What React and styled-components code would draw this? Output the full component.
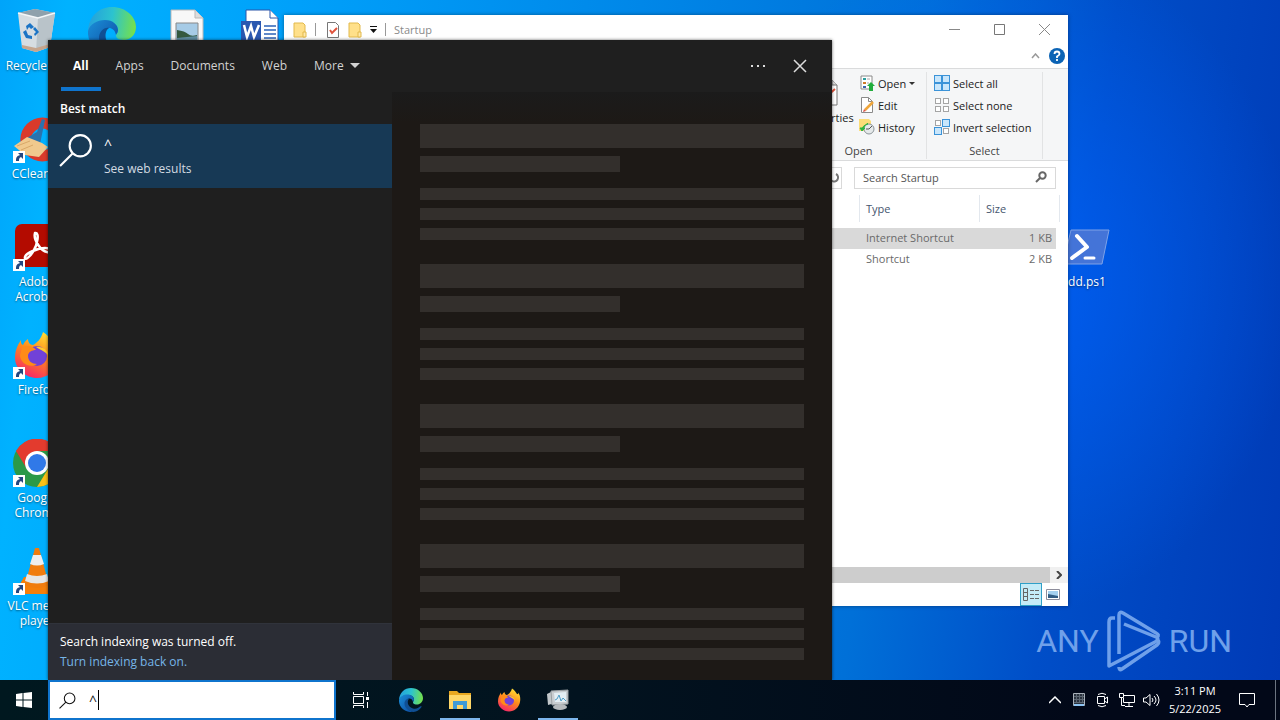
import React from 'react'
import styled, { createGlobalStyle } from 'styled-components'

const GlobalStyle = createGlobalStyle`
    * {
        box-sizing: border-box;
    }

    body {
        margin: 0;
        font-family: 'Open Sans', 'Noto Sans', sans-serif;
        overflow: hidden;
    }

    button, input {
        font-family: inherit;
        font-size: inherit;
        color: inherit;
        background: none;
        border: none;
        padding: 0;
        margin: 0;
        outline: none;
    }

    svg {
        display: block;
        flex-shrink: 0;
    }
`

/* ---------- desktop ---------- */

const Screen = styled.div`
    height: 100vh;
    display: flex;
    flex-direction: column;
`

const Desktop = styled.main`
    position: relative;
    flex: 1;
    min-height: 0;
    overflow: hidden;
    background:
        radial-gradient(ellipse 300px 340px at 1000px 280px, rgba(0, 98, 255, 0.8), rgba(0, 90, 240, 0) 100%),
        linear-gradient(97deg, #00a4fa 0%, #00b2ff 5%, #00a0fa 22%, #0084e6 50%, #0070d8 68%, #004ec8 82%, #003ab6 100%);
`

const IconGrid = styled.div`
    display: grid;
    grid-template-columns: repeat(15, 74px);
    grid-template-rows: repeat(6, 108px);
    column-gap: 1px;
`

const Shortcut = styled.a`
    grid-column: ${({ $col }) => $col};
    grid-row: ${({ $row }) => $row};
    display: flex;
    flex-direction: column;
    align-items: center;
    padding-top: 7px;
    color: #fff;
    font-size: 12px;
    line-height: 15px;
    text-align: center;
    text-decoration: none;
    text-shadow: 0 1px 2px rgba(0, 0, 0, 0.5);

    span {
        margin-top: 3px;
        padding: 0 4px;
    }
`

const Watermark = styled.div`
    position: absolute;
    right: 48px;
    bottom: 7px;
    display: flex;
    align-items: center;
    gap: 7px;
    color: #6fa0ea;
    font-family: 'Roboto', sans-serif;
    font-size: 32px;
    line-height: 64px;
`

/* ---------- explorer window ---------- */

const Explorer = styled.section`
    position: absolute;
    top: 15px;
    left: 284px;
    right: 212px;
    bottom: 74px;
    display: flex;
    flex-direction: column;
    background: #fff;
    color: #222;
    font-size: 11px;
    box-shadow: 0 0 4px rgba(0, 0, 0, 0.4);
`

const TitleBar = styled.header`
    display: flex;
    align-items: center;
    height: 29px;
    padding-left: 9px;
    gap: 8px;
    color: #8a8a8a;
`

const TitleDivider = styled.i`
    width: 1px;
    height: 13px;
    background: #999;
`

const WindowButtons = styled.div`
    display: flex;
    margin-left: auto;
    padding-right: 1px;

    button {
        display: flex;
        align-items: center;
        justify-content: center;
        width: 45px;
        height: 29px;
    }
`

const TabStrip = styled.div`
    display: flex;
    align-items: center;
    justify-content: flex-end;
    gap: 9px;
    height: 24px;
    padding-right: 3px;
`

const Ribbon = styled.div`
    display: flex;
    justify-content: flex-end;
    height: 93px;
    padding: 3px 25px 1px 0;
    background: #f5f6f7;
    border-top: 1px solid #dadbdc;
    border-bottom: 1px solid #dadbdc;
`

const RibbonGroup = styled.div`
    display: flex;
    flex-direction: column;
    align-items: center;
    border-right: 1px solid #e2e3e4;
`

const RibbonBody = styled.div`
    display: flex;
    gap: 3px;
    padding: 0 0 0 7px;
`

const RibbonColumn = styled.div`
    display: flex;
    flex-direction: column;
    width: ${({ $width }) => $width};
`

const RibbonButton = styled.button`
    display: flex;
    align-items: center;
    gap: 3px;
    height: 22px;
    white-space: nowrap;
`

const BigButton = styled.button`
    display: flex;
    flex-direction: column;
    align-items: center;
    gap: 1px;
    width: 58px;
    padding-top: 5px;
`

const GroupLabel = styled.div`
    padding-top: 5px;
    line-height: 16px;
    color: #444;
`

const AddressRow = styled.div`
    display: flex;
    gap: 12px;
    padding: 6px 12px;
`

const PathBox = styled.div`
    display: flex;
    flex: 1;
    align-items: center;
    justify-content: flex-end;
    border: 1px solid #d9d9d9;
`

const SearchBox = styled.label`
    display: flex;
    align-items: center;
    width: 202px;
    height: 22px;
    padding: 0 8px 2px;
    border: 1px solid #d9d9d9;

    input {
        flex: 1;
        min-width: 0;
    }

    input::placeholder {
        color: #555;
        opacity: 1;
    }
`

const FileTable = styled.table`
    width: calc(100% - 8px);
    table-layout: fixed;
    border-collapse: separate;
    border-spacing: 0;
    color: #6a6a6a;

    th {
        height: 27px;
        padding: 0 6px;
        border-right: 1px solid #e3e8ee;
        color: #46566e;
        font-weight: 400;
        text-align: left;
    }

    td {
        height: 21px;
        padding: 0 6px 2px;
    }

    td:last-child {
        padding-right: 4px;
        border-right: 4px solid #fff;
        text-align: right;
    }

    tbody::before {
        content: '';
        display: block;
        height: 6px;
    }
`

const FileRow = styled.tr`
    background: ${({ $selected }) => ($selected ? '#d9d9d9' : 'transparent')};
`

const ScrollTrack = styled.div`
    display: flex;
    align-items: center;
    height: 16px;
    margin-top: auto;
    background: #f0f0f0;
`

const ScrollThumb = styled.div`
    flex: 1;
    height: 16px;
    background: #cdcdcd;
`

const ScrollArrow = styled.button`
    display: flex;
    justify-content: center;
    width: 18px;
`

const StatusBar = styled.footer`
    display: flex;
    justify-content: flex-end;
    padding-right: 4px;
`

const ViewButton = styled.button`
    display: flex;
    align-items: center;
    justify-content: center;
    width: 22px;
    height: 23px;
    border: 1px solid ${({ $active }) => ($active ? '#2fa0c8' : 'transparent')};
    background: ${({ $active }) => ($active ? '#c4ebf7' : 'transparent')};
`

/* ---------- search flyout ---------- */

const Flyout = styled.section`
    position: absolute;
    top: 40px;
    bottom: 0;
    left: 48px;
    width: 784px;
    display: flex;
    flex-direction: column;
    background: #1f1f1f;
    color: #fff;
    font-size: 12px;
    box-shadow: 0 0 3px rgba(0, 0, 0, 0.6);
`

const FlyoutHeader = styled.header`
    display: flex;
    align-items: stretch;
    gap: 3px;
    height: 52px;
    padding: 0 20px 1px 13px;
`

const FilterTab = styled.button`
    display: flex;
    align-items: center;
    gap: 6px;
    padding: 4px 12px 0;
    border-bottom: 4px solid ${({ $active }) => ($active ? '#0f74cd' : 'transparent')};
    color: ${({ $active }) => ($active ? '#fff' : '#d2d2d2')};
    font-weight: ${({ $active }) => ($active ? 700 : 400)};
`

const HeaderActions = styled.div`
    display: flex;
    gap: 18px;
    margin-left: auto;

    button {
        display: flex;
        align-items: center;
        justify-content: center;
        width: 24px;
    }
`

const FlyoutBody = styled.div`
    display: flex;
    flex: 1;
    min-height: 0;
`

const ResultList = styled.div`
    display: flex;
    flex-direction: column;
    width: 344px;
`

const ListHeading = styled.h2`
    margin: 0;
    padding: 2px 12px 0;
    font-size: 12px;
    font-weight: 600;
    line-height: 30px;
`

const ResultItem = styled.button`
    display: flex;
    align-items: flex-start;
    gap: 11px;
    height: 64px;
    padding: 9px 0 0 11px;
    background: #173955;
    text-align: left;
    line-height: 24px;
`

const ResultTitle = styled.div`
    font-size: 14px;
`

const ResultHint = styled.div`
    color: #d3dbe2;
`

const IndexNotice = styled.div`
    margin-top: auto;
    padding: 8px 12px;
    border-top: 1px solid #30333b;
    background: #2b2d35;
    line-height: 20px;

    a {
        display: block;
        color: #76b5e8;
        text-decoration: none;
    }
`

const Preview = styled.div`
    flex: 1;
    padding: 32px 28px 0;
    background: linear-gradient(#1b1b1b, #1d1916 30px);
    overflow: hidden;
`

const SkeletonGroup = styled.div`
    display: flex;
    flex-direction: column;
    gap: 8px;
    margin-bottom: 24px;
`

const Bar = styled.div`
    width: ${({ $width }) => $width || '100%'};
    height: ${({ $height }) => $height || '12px'};
    margin-bottom: ${({ $space }) => $space || '0'};
    background: #332f2c;
`

/* ---------- taskbar ---------- */

const Taskbar = styled.nav`
    display: flex;
    height: 40px;
    background: linear-gradient(90deg, #00181f, #02131f 45%, #020818 85%);
    color: #fff;
`

const StartButton = styled.button`
    display: flex;
    align-items: center;
    justify-content: center;
    width: 48px;
`

const TaskSearch = styled.label`
    display: flex;
    align-items: center;
    width: 288px;
    padding-left: 9px;
    border: 2px solid #0f74cd;
    background: #fff;
    color: #111;
    font-size: 14px;

    input {
        width: 9px;
        margin-left: 13px;
        caret-color: transparent;
    }
`

const Caret = styled.i`
    width: 1px;
    height: 20px;
    background: #000;
`

const TaskButtons = styled.div`
    display: flex;
    gap: 9px;
    padding-left: 5px;
`

const TaskButton = styled.button`
    display: flex;
    align-items: center;
    justify-content: center;
    width: ${({ $wide }) => ($wide ? '41px' : '40px')};
    padding-top: 2px;
    border-bottom: 2px solid ${({ $running }) => ($running ? '#7db6ec' : 'transparent')};
`

const Tray = styled.div`
    display: flex;
    margin-left: auto;
`

const TrayButton = styled.button`
    display: flex;
    align-items: center;
    justify-content: center;
    width: ${({ $width }) => $width || '24px'};
`

const Clock = styled.button`
    width: 56px;
    margin-left: 4px;
    line-height: 18px;
    text-align: center;

    && {
        font-size: 11px;
    }
`

const ShowDesktop = styled.button`
    width: 5px;
    margin-left: 4px;

    && {
        border-left: 1px solid #6c7480;
    }
`

/* ---------- drawings ---------- */

const ShortcutArrow = () => (
    <g>
        <path d="M0 36h12v12H0z" fill="#fff" />
        <path d="M3 46c0-4 1-5 4-6l-2-2h5v6l-2-2c-2 1-2 2-2 4z" fill="#25477f" />
    </g>
)

const RecycleIcon = () => (
    <svg width="48" height="48" viewBox="0 0 48 48">
        <path d="M5 6l17-4 20 4-5 34-14 5-14-4z" fill="#d6dde2" />
        <path d="M5 6l17-4 20 4-17 5z" fill="#8fa1ac" />
        <path d="M25 11l17-5-5 34-14 5z" fill="#b9c3c9" />
        <path d="M5 6l20 5 17-5" fill="none" stroke="#f4f7f9" strokeWidth="1.5" />
        <path d="M13 19l4-3 4 4-3 2-2-2-2 3zM22 20l4 5-4 4-1-2 2-2-3-3zM19 32l-6-1-3-6 3-2 2 5 4 1z" fill="#1b74c5" />
        <path d="M9 38l14 3 14-4v3l-14 5-14-4z" fill="#c5a58d" />
    </svg>
)

const EdgeIcon = ({ size }) => (
    <svg width={size} height={size} viewBox="0 0 48 48">
        <defs>
            <linearGradient id="edgeTop" x1="0" y1="0.3" x2="1" y2="0.4">
                <stop offset="0" stopColor="#249fdd" />
                <stop offset="0.5" stopColor="#2cc3cf" />
                <stop offset="1" stopColor="#74e04c" />
            </linearGradient>
            <linearGradient id="edgeLow" x1="0" y1="0" x2="1" y2="1">
                <stop offset="0" stopColor="#1b8fd8" />
                <stop offset="1" stopColor="#0c479e" />
            </linearGradient>
        </defs>
        <path d="M0 24C1 9 11 0 24 0c14 0 24 10 24 20 0 8-6 13-12 13-7 0-8-3-8-5 0-1 2-2 2-5 0-5-5-9-12-9C8 14 2 20 0 24z" fill="url(#edgeTop)" />
        <path d="M0 24c2-7 9-11 17-11 8 0 13 5 13 10 0 3-2 4-2 5-1-5-4-7-7-7-4 0-7 5-7 10 0 9 8 16 15 17C12 50-1 38 0 24z" fill="url(#edgeLow)" />
        <path d="M21 21c-5 3-6 16 7 20 6 2 11-1 14-4 2-1 4-1 3 1-4 6-9 9-16 10-9-1-18-8-18-17 0-6 5-11 10-10z" fill="#104f93" />
    </svg>
)

const ImageFileIcon = () => (
    <svg width="48" height="48" viewBox="0 0 48 48">
        <path d="M8 3h24l8 8v36H8z" fill="#f8f8f8" stroke="#b9b9b9" />
        <path d="M32 3v8h8" fill="#dcdcdc" stroke="#b9b9b9" />
        <path d="M13 16h22v20H13z" fill="#a6cbe6" stroke="#888" />
        <path d="M14 23q8 1 11 4t9 1v7H14z" fill="#34593f" />
        <path d="M14 31l20-2v6H14z" fill="#5f8ea2" />
    </svg>
)

const WordFileIcon = () => (
    <svg width="48" height="48" viewBox="0 0 48 48">
        <path d="M8 3h24l8 8v36H8z" fill="#fff" stroke="#2b55a8" />
        <path d="M32 3v8h8" fill="#fff" stroke="#2b55a8" />
        <path d="M26 19h12M26 23h12M26 27h12M26 31h12" stroke="#2b62b8" strokeWidth="1.5" />
        <path d="M3 14h20v20H3z" fill="#2a57b0" />
        <path d="M6 18l3 12 4-11 3 11 5-12" fill="none" stroke="#fff" strokeWidth="2.5" />
    </svg>
)

const CCleanerIcon = () => (
    <svg width="48" height="48" viewBox="0 0 48 48">
        <path d="M45 9A22 22 0 1 0 45 40l-8-8A11 11 0 1 1 37 17z" fill="#d93a2b" />
        <path d="M29 4l3 1-5 24-13-6q8-5 10-6z" fill="#2a73ae" />
        <path d="M1 31l13-9 15 6 6 4-9 10-14-2z" fill="#f0c98d" />
        <path d="M4 31l13-5M8 35l12-5" stroke="#d8a868" />
        <ShortcutArrow />
    </svg>
)

const AcrobatIcon = () => (
    <svg width="48" height="48" viewBox="0 0 48 48">
        <rect x="2" y="1" width="44" height="43" rx="7" fill="#b30b00" />
        <path d="M22 10c5-1 2 12-1 17-3 6-10 12-9 7 1-4 13-9 20-9s6 5 2 4c-6-1-14-12-12-19z" fill="none" stroke="#fff" strokeWidth="2.5" />
        <ShortcutArrow />
    </svg>
)

const FirefoxIcon = ({ size, arrow }) => (
    <svg width={size} height={size} viewBox="0 0 48 48">
        <defs>
            <linearGradient id="foxBody" x1="0.8" y1="0" x2="0.3" y2="1">
                <stop offset="0" stopColor="#ffe838" />
                <stop offset="0.5" stopColor="#ff8a1c" />
                <stop offset="1" stopColor="#f6246a" />
            </linearGradient>
        </defs>
        <path d="M30 1c5 3 8 8 10 11 2 1 3-1 2-3 5 5 5 13 4 19-2 11-11 19-22 19S2 38 2 27c0-7 2-12 6-18 0 3 0 4 2 5 1-2 2-4 5-6 0 3 2 6 5 6 4-2 8-6 10-13z" fill="url(#foxBody)" />
        <circle cx="24" cy="25" r="10" fill="#7141d8" />
        <path d="M9 17c5-4 11-2 14 2-4 0-8 2-8 6 0 5 4 8 9 8-7 5-17-1-17-9z" fill="#ff8b18" />
        <path d="M23 16c6-1 12 3 13 9-4-5-9-6-13-9z" fill="#ffcb2d" />
        {arrow && <ShortcutArrow />}
    </svg>
)

const ChromeIcon = () => (
    <svg width="48" height="48" viewBox="0 0 48 48">
        <circle cx="24" cy="24" r="24" fill="#2b9948" />
        <path d="M3 12a24 24 0 0 1 42 0H24L14 30z" fill="#e33b2e" />
        <path d="M45 12a24 24 0 0 1-21 36l11-18V12z" fill="#fbc116" />
        <circle cx="24" cy="24" r="12" fill="#fff" />
        <circle cx="24" cy="24" r="9" fill="#3079e8" />
        <ShortcutArrow />
    </svg>
)

const VlcIcon = () => (
    <svg width="48" height="48" viewBox="0 0 48 48">
        <path d="M11 30h26l8 14-2 3H5l-2-3z" fill="#f57f0a" />
        <path d="M22 1h4l10 37q-12 6-24 0z" fill="#f07c0e" />
        <path d="M20 8h8l3 9q-7 3-14 0z" fill="#eee" />
        <path d="M14 27q10 4 20 0l2 7q-12 5-24 0z" fill="#e6e6e6" />
        <ShortcutArrow />
    </svg>
)

const PowerShellIcon = () => (
    <svg width="48" height="48" viewBox="0 0 48 48">
        <path d="M8 7h38l-7 34H0z" fill="#4474d8" stroke="#7ea2e8" />
        <path d="M14 13l10 11-15 11" fill="none" stroke="#fff" strokeWidth="4" strokeLinecap="round" strokeLinejoin="round" />
        <path d="M22 35h9" stroke="#fff" strokeWidth="3" strokeLinecap="round" />
    </svg>
)

const PlayLogo = () => (
    <svg width="56" height="64" viewBox="0 0 56 64" fill="none" stroke="#6fa0ea" strokeWidth="3.5" strokeLinejoin="round">
        <path d="M9 9H6Q3 9 3 13v44l46-24q5-3 1-5L18 15" />
        <path d="M51 28q3-2-1-4L17 4Q13 2 13 6v39" />
        <path d="M50 30q5 3 1 6L16 60q-3 2-3-2" />
    </svg>
)

const SmallFolder = () => (
    <svg width="14" height="16" viewBox="0 0 14 16">
        <path d="M1 1h9l2 2v12H1z" fill="#ffe08a" stroke="#e2b94c" />
        <path d="M10 10h3v5h-3z" fill="#ffe9ab" stroke="#e2b94c" />
    </svg>
)

const CheckPage = () => (
    <svg width="16" height="16" viewBox="0 0 16 16">
        <path d="M3.500.500h8l3 3v12h-11z" fill="#fff" stroke="#777" />
        <path d="M6 8l2 3 5-5" fill="none" stroke="#e0533c" strokeWidth="2" />
    </svg>
)

const PropertiesIcon = () => (
    <svg width="22" height="32" viewBox="0 0 22 32">
        <path d="M1 3h15l5 5v20H1z" fill="#fff" stroke="#777" />
        <path d="M16 3v5h5" fill="#ddd" stroke="#777" />
        <path d="M6 15l4 5 9-8" fill="none" stroke="#e0533c" strokeWidth="2" />
    </svg>
)

const OpenIcon = () => (
    <svg width="16" height="16" viewBox="0 0 16 16">
        <path d="M2 1h11v13H2z" fill="#fff" stroke="#8a8a8a" />
        <path d="M4 3h3v2H4z" fill="#2b9e9e" />
        <path d="M4 7h3v2H4z" fill="#d07c2a" />
        <path d="M4 11h3v2H4z" fill="#3b65ae" />
        <path d="M8 4h3M8 8h2" stroke="#aaa" />
        <path d="M12 7l4 4h-2v5h-4v-5H8z" fill="#22ad3c" />
    </svg>
)

const EditIcon = () => (
    <svg width="16" height="16" viewBox="0 0 16 16">
        <path d="M2.500.500h7l4 4v11h-11z" fill="#fff" stroke="#8a8a8a" />
        <path d="M9.500.500v4h4" fill="none" stroke="#8a8a8a" />
        <path d="M6 13l8-8" stroke="#f0a63a" strokeWidth="2.5" />
        <path d="M4 15l1-3 2 2z" fill="#d9534a" />
    </svg>
)

const HistoryIcon = () => (
    <svg width="16" height="16" viewBox="0 0 16 16">
        <path d="M0 0h10l2 2v10H0z" fill="#fbdd78" />
        <circle cx="10" cy="10" r="5" fill="#e5e9ea" stroke="#8b9498" />
        <path d="M10 10l3-3M10 10H7" stroke="#555" />
        <path d="M3 12q0-6 6-7l-1-1M3 12l-2-3h5z" fill="#2fb341" stroke="#2fb341" />
    </svg>
)

const Squares = ({ filled }) => (
    <svg width="16" height="16" viewBox="0 0 16 16">
        {[[0, 0], [8, 0], [0, 8], [8, 8]].map(([x, y], i) => (
            <rect
                key={i}
                x={x + (filled[i] ? 0.5 : 1.5)}
                y={y + (filled[i] ? 0.5 : 1.5)}
                width={filled[i] ? 7 : 5}
                height={filled[i] ? 7 : 5}
                fill={filled[i] ? '#c9e6fb' : '#fff'}
                stroke={filled[i] ? '#3b93d8' : '#a5a5a5'}
            />
        ))}
    </svg>
)

const Triangle = ({ width, color }) => (
    <svg width={width} height={width / 2} viewBox="0 0 10 5">
        <path d="M0 0h10L5 5z" fill={color} />
    </svg>
)

const Magnifier = ({ size, width }) => (
    <svg width={size} height={size} viewBox="0 0 32 32" fill="none" stroke="currentColor" strokeWidth={width}>
        <circle cx="20" cy="12" r="10" />
        <path d="M13 19L1 31" />
    </svg>
)

const ExplorerIcon = () => (
    <svg width="22" height="20" viewBox="0 0 22 20">
        <path d="M0 1h8l2 2h12v16H0z" fill="#e9a820" />
        <path d="M0 5h22v14H0z" fill="#ffd768" />
        <path d="M4 19v-8h14v8h-4v-4H8v4z" fill="#3f9bd6" />
    </svg>
)

const MonitorIcon = () => (
    <svg width="24" height="24" viewBox="0 0 24 24">
        <path d="M1 6l6-3 2 12-7 2z" fill="#c3c8cb" />
        <path d="M5 3l17-1v14l-16 1z" fill="#c9cdd0" stroke="#9a9fa2" />
        <path d="M8 5l12-1v10H9z" fill="#e4eef3" />
        <path d="M9 12l2-1 2-4 2 6 2-3 3 3" fill="none" stroke="#4e9cc6" />
        <ellipse cx="14" cy="19" rx="7" ry="3" fill="#b6babd" />
    </svg>
)

const shortcuts = [
    { col: 1, row: 1, label: 'Recycle Bin', icon: <RecycleIcon /> },
    { col: 2, row: 1, icon: <EdgeIcon size={48} /> },
    { col: 3, row: 1, icon: <ImageFileIcon /> },
    { col: 4, row: 1, icon: <WordFileIcon /> },
    { col: 1, row: 2, label: 'CCleaner', icon: <CCleanerIcon /> },
    { col: 1, row: 3, label: 'Adobe Acrobat', icon: <AcrobatIcon /> },
    { col: 1, row: 4, label: 'Firefox', icon: <FirefoxIcon size={48} arrow /> },
    { col: 1, row: 5, label: 'Google Chrome', icon: <ChromeIcon /> },
    { col: 1, row: 6, label: 'VLC media player', icon: <VlcIcon /> },
    { col: 15, row: 3, label: 'dd.ps1', icon: <PowerShellIcon /> },
]

const ExplorerWindow = () => {
    return (
        <Explorer>
            <TitleBar>
                <SmallFolder />
                <TitleDivider />
                <CheckPage />
                <SmallFolder />
                <svg width="7" height="8" viewBox="0 0 7 8">
                    <path d="M0 0h7v1H0zM0 3h7L3.500 7z" fill="#111" />
                </svg>
                <TitleDivider />
                <span>Startup</span>
                <WindowButtons>
                    <button aria-label="Minimize">
                        <svg width="11" height="11" viewBox="0 0 11 11"><path d="M0 5.500h11" stroke="#888" /></svg>
                    </button>
                    <button aria-label="Maximize">
                        <svg width="11" height="11" viewBox="0 0 11 11"><path d="M.5.500h10v10H.5z" fill="none" stroke="#777" /></svg>
                    </button>
                    <button aria-label="Close">
                        <svg width="11" height="11" viewBox="0 0 11 11"><path d="M0 0l11 11M11 0L0 11" stroke="#888" /></svg>
                    </button>
                </WindowButtons>
            </TitleBar>
            <TabStrip>
                <svg width="9" height="6" viewBox="0 0 9 6"><path d="M1 5l3.500-4L8 5" fill="none" stroke="#999" strokeWidth="1.5" /></svg>
                <svg width="16" height="16" viewBox="0 0 16 16">
                    <circle cx="8" cy="8" r="8" fill="#0b63b5" />
                    <path d="M5.500 6q0-2.500 2.500-2.500T10.500 6Q10.500 7 8 8.500V10M8 11v2" fill="none" stroke="#fff" strokeWidth="1.800" />
                </svg>
            </TabStrip>
            <Ribbon>
                <RibbonGroup>
                    <RibbonBody>
                        <BigButton>
                            <PropertiesIcon />
                            Properties
                        </BigButton>
                        <RibbonColumn $width="67px">
                            <RibbonButton><OpenIcon />Open <Triangle width={6} color="#333" /></RibbonButton>
                            <RibbonButton><EditIcon />Edit</RibbonButton>
                            <RibbonButton><HistoryIcon />History</RibbonButton>
                        </RibbonColumn>
                    </RibbonBody>
                    <GroupLabel>Open</GroupLabel>
                </RibbonGroup>
                <RibbonGroup>
                    <RibbonBody>
                        <RibbonColumn $width="108px">
                            <RibbonButton><Squares filled={[1, 1, 1, 1]} />Select all</RibbonButton>
                            <RibbonButton><Squares filled={[0, 0, 0, 0]} />Select none</RibbonButton>
                            <RibbonButton><Squares filled={[0, 1, 1, 0]} />Invert selection</RibbonButton>
                        </RibbonColumn>
                    </RibbonBody>
                    <GroupLabel>Select</GroupLabel>
                </RibbonGroup>
            </Ribbon>
            <AddressRow>
                <PathBox>
                    <svg width="14" height="14" viewBox="0 0 14 14">
                        <path d="M9 3a4 4 0 1 1-5 1M4 8V4H0" fill="none" stroke="#777" strokeWidth="2" />
                    </svg>
                </PathBox>
                <SearchBox>
                    <input type="text" placeholder="Search Startup" aria-label="Search Startup" />
                    <svg width="12" height="12" viewBox="0 0 12 12" fill="none" stroke="#666" strokeWidth="2">
                        <circle cx="7.500" cy="4.500" r="3.200" />
                        <path d="M5 7l-4 4" />
                    </svg>
                </SearchBox>
            </AddressRow>
            <FileTable>
                <colgroup>
                    <col />
                    <col width="120" />
                    <col width="80" />
                </colgroup>
                <thead>
                    <tr>
                        <th />
                        <th>Type</th>
                        <th>Size</th>
                    </tr>
                </thead>
                <tbody>
                    <FileRow $selected>
                        <td />
                        <td>Internet Shortcut</td>
                        <td>1 KB</td>
                    </FileRow>
                    <FileRow>
                        <td />
                        <td>Shortcut</td>
                        <td>2 KB</td>
                    </FileRow>
                </tbody>
            </FileTable>
            <ScrollTrack>
                <ScrollThumb />
                <ScrollArrow aria-label="Scroll right">
                    <svg width="6" height="8" viewBox="0 0 6 8"><path d="M1 0l4 4-4 4" fill="none" stroke="#444" strokeWidth="2" /></svg>
                </ScrollArrow>
            </ScrollTrack>
            <StatusBar>
                <ViewButton $active aria-label="Details view">
                    <svg width="16" height="14" viewBox="0 0 16 14" fill="none" stroke="#666">
                        <path d="M.5.500h4v12h-4zM.5 4.500h4M.5 8.500h4M7 2.500h4M12 2.500h4M7 6.500h4M12 6.500h4M7 10.500h4M12 10.500h4" />
                    </svg>
                </ViewButton>
                <ViewButton aria-label="Large icons view">
                    <svg width="14" height="11" viewBox="0 0 14 11">
                        <path d="M.5.500h13v10H.5z" fill="#fff" stroke="#8d8d9b" />
                        <path d="M2 2h10v7H2z" fill="#a4d0ef" />
                        <path d="M2 5l10 2v2H2z" fill="#315c83" />
                    </svg>
                </ViewButton>
            </StatusBar>
        </Explorer>
    )
}

const SearchFlyout = () => {
    return (
        <Flyout>
            <FlyoutHeader>
                <FilterTab $active>All</FilterTab>
                <FilterTab>Apps</FilterTab>
                <FilterTab>Documents</FilterTab>
                <FilterTab>Web</FilterTab>
                <FilterTab>More <Triangle width={10} color="#d2d2d2" /></FilterTab>
                <HeaderActions>
                    <button aria-label="Options">
                        <svg width="16" height="4" viewBox="0 0 16 4" fill="#ddd">
                            <path d="M1 1h2v2H1zM7 1h2v2H7zM13 1h2v2h-2z" />
                        </svg>
                    </button>
                    <button aria-label="Close">
                        <svg width="14" height="14" viewBox="0 0 14 14"><path d="M1 1l12 12M13 1L1 13" stroke="#ddd" strokeWidth="1.500" /></svg>
                    </button>
                </HeaderActions>
            </FlyoutHeader>
            <FlyoutBody>
                <ResultList>
                    <ListHeading>Best match</ListHeading>
                    <ResultItem>
                        <Magnifier size={34} width={2} />
                        <div>
                            <ResultTitle>^</ResultTitle>
                            <ResultHint>See web results</ResultHint>
                        </div>
                    </ResultItem>
                    <IndexNotice>
                        Search indexing was turned off.
                        <a href="#indexing">Turn indexing back on.</a>
                    </IndexNotice>
                </ResultList>
                <Preview>
                    {[1, 2, 3, 4].map((n) => (
                        <SkeletonGroup key={n}>
                            <Bar $height="24px" />
                            <Bar $height="16px" $width="200px" $space="8px" />
                            <Bar />
                            <Bar />
                            <Bar />
                        </SkeletonGroup>
                    ))}
                </Preview>
            </FlyoutBody>
        </Flyout>
    )
}

const App = () => {
    return (
        <Screen>
            <GlobalStyle />
            <Desktop>
                <IconGrid>
                    {shortcuts.map(({ col, row, label, icon }) => (
                        <Shortcut key={`${col}-${row}`} href="#open" $col={col} $row={row}>
                            {icon}
                            {label && <span>{label}</span>}
                        </Shortcut>
                    ))}
                </IconGrid>
                <Watermark>
                    <span>ANY</span>
                    <PlayLogo />
                    <span>RUN</span>
                </Watermark>
                <ExplorerWindow />
                <SearchFlyout />
            </Desktop>
            <Taskbar>
                <StartButton aria-label="Start">
                    <svg width="16" height="16" viewBox="0 0 16 16" fill="#fff">
                        <path d="M0 2l6.500-1v6.500H0zM7.500 1L16 0v7.500H7.500zM0 8.500h6.500V15L0 14zM7.500 8.500H16V16l-8.500-1z" />
                    </svg>
                </StartButton>
                <TaskSearch>
                    <Magnifier size={17} width={2} />
                    <input type="text" defaultValue="^" aria-label="Type here to search" />
                    <Caret />
                </TaskSearch>
                <TaskButtons>
                    <TaskButton $wide aria-label="Task View">
                        <svg width="17" height="16" viewBox="0 0 17 16" fill="none" stroke="#fff">
                            <path d="M.5 0v2.500h10V0M.5 4.500h10v7H.5zM.5 16v-2.500h10V16M14.500 0v4M14.500 10v6" />
                            <path d="M13 5h3v3h-3z" fill="#fff" stroke="none" />
                        </svg>
                    </TaskButton>
                    <TaskButton aria-label="Microsoft Edge"><EdgeIcon size={24} /></TaskButton>
                    <TaskButton aria-label="File Explorer" $running><ExplorerIcon /></TaskButton>
                    <TaskButton aria-label="Firefox"><FirefoxIcon size={24} /></TaskButton>
                    <TaskButton aria-label="System monitor" $running><MonitorIcon /></TaskButton>
                </TaskButtons>
                <Tray>
                    <TrayButton aria-label="Show hidden icons">
                        <svg width="12" height="8" viewBox="0 0 12 8"><path d="M0 7l6-6 6 6" fill="none" stroke="#fff" strokeWidth="1.500" /></svg>
                    </TrayButton>
                    <TrayButton aria-label="Status">
                        <svg width="12" height="14" viewBox="0 0 12 14">
                            <path d="M.5.500h11v12H.5z" fill="#29313d" stroke="#a8b0b9" />
                            <path d="M3.500 1v9M6.500 1v9M9.500 1v9M1 3.500h10M1 6.500h10M1 9.500h10" stroke="#5c6672" />
                            <path d="M1 11h10v2H1z" fill="#8dc3f2" />
                        </svg>
                    </TrayButton>
                    <TrayButton aria-label="Meet Now">
                        <svg width="14" height="16" viewBox="0 0 14 16" fill="none" stroke="#fff">
                            <path d="M2 2.500Q6 0 10 2.500M2 13.500q4 2.500 8 0M1.500 4.500h7v7h-7zM8.500 7l3-2v6l-3-2" />
                        </svg>
                    </TrayButton>
                    <TrayButton aria-label="Network">
                        <svg width="16" height="14" viewBox="0 0 16 14" fill="none" stroke="#fff">
                            <path d="M5 2.500h10.500v7H4.500V5M.5.500h4v4h-4zM2.500 4.500v8H6M10 10v3M6 13.500h8" />
                        </svg>
                    </TrayButton>
                    <TrayButton aria-label="Volume">
                        <svg width="17" height="14" viewBox="0 0 17 14" fill="none" stroke="#fff">
                            <path d="M.5 5v4H3l4 3.500v-11L3 5zM9 5q2 2 0 4M11 3q4 4 0 8M13.500 1q5 6 0 12" />
                        </svg>
                    </TrayButton>
                    <Clock>
                        3:11 PM
                        <br />
                        5/22/2025
                    </Clock>
                    <TrayButton $width="48px" aria-label="Notifications">
                        <svg width="16" height="16" viewBox="0 0 16 16" fill="none" stroke="#fff">
                            <path d="M.5 1.500h15v11H10l-2 2.500-2-2.500H.5z" />
                        </svg>
                    </TrayButton>
                    <ShowDesktop aria-label="Show desktop" />
                </Tray>
            </Taskbar>
        </Screen>
    )
}

export default App
